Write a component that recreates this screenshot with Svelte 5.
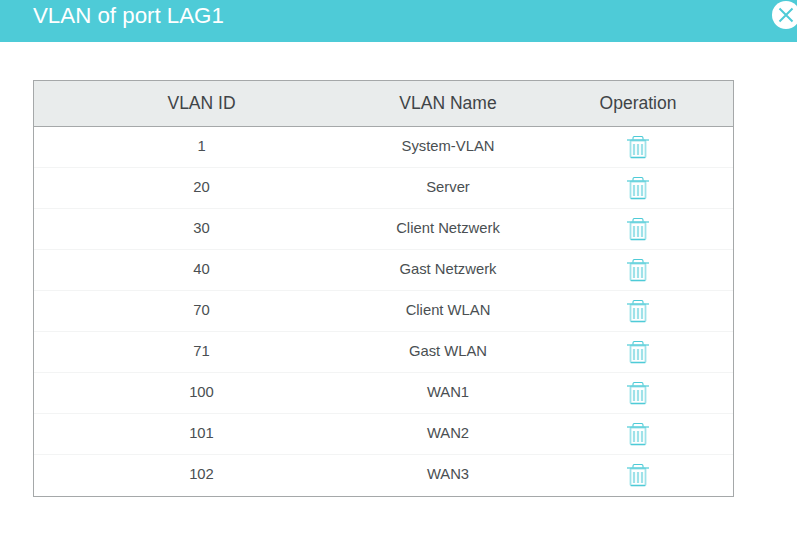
<script>
  const rows = [
    [1, 'System-VLAN'],
    [20, 'Server'],
    [30, 'Client Netzwerk'],
    [40, 'Gast Netzwerk'],
    [70, 'Client WLAN'],
    [71, 'Gast WLAN'],
    [100, 'WAN1'],
    [101, 'WAN2'],
    [102, 'WAN3'],
  ]
</script>

<div class="dialog">
  <header class="title">
    <h2>VLAN of port LAG1</h2>
    <button class="close" aria-label="Close">
      <svg width="18" height="18" viewBox="0 0 18 18">
        <path d="M2.500 2.500L15.500 15.500M15.500 2.500L2.500 15.500" stroke="#4ecbd7" stroke-width="2" fill="none" />
      </svg>
    </button>
  </header>

  <div class="table">
    <div class="row head">
      <div>VLAN ID</div>
      <div>VLAN Name</div>
      <div>Operation</div>
    </div>
    {#each rows as r}
      <div class="item">
        <div class="row">
          <div>{r[0]}</div>
          <div>{r[1]}</div>
          <div class="op">
            <svg width="22" height="23" viewBox="0 0 22 23" fill="none">
              <path d="M7 8v11M11 8v11M15 8v11" stroke="#4ecbd7" stroke-width="2.200" opacity=".55" />
              <rect x="3.500" y="4.500" width="15" height="17" rx="1" stroke="#4ecbd7" stroke-width="1.800" opacity=".55" />
              <path d="M4 21.500h14" stroke="#4ecbd7" stroke-width="1" />
              <path d="M0 4h22" stroke="#4ecbd7" stroke-width="1.200" />
              <path d="M6 3.500V2a1.500 1.500 0 0 1 1.500-1.500h7A1.500 1.500 0 0 1 16 2v1.500" stroke="#4ecbd7" stroke-width="1.100" />
            </svg>
          </div>
        </div>
      </div>
    {/each}
  </div>
</div>

<style>
  :global(body) {
    margin: 0;
    background: #fff;
    overflow: hidden;
  }

  .dialog {
    width: 797px;
    height: 533px;
    font-family: "Liberation Sans", Arial, sans-serif;
    color: #4a4f52;
  }

  .title {
    display: flex;
    justify-content: space-between;
    height: 42px;
    padding-left: 33px;
    box-sizing: border-box;
    background: #4ecbd7;
    overflow: hidden;
  }

  h2 {
    margin: 0;
    font-size: 22.300px;
    font-weight: 400;
    line-height: 31px;
    color: #fff;
  }

  .close {
    display: flex;
    align-items: center;
    justify-content: center;
    flex: none;
    width: 28px;
    height: 28px;
    margin: 1px -3px 0 0;
    padding: 0;
    border: 0;
    border-radius: 50%;
    background: #fff;
  }

  .table {
    width: 701px;
    margin: 38px 0 0 33px;
    box-sizing: border-box;
    border: 1px solid #a5a8a9;
  }

  .row {
    display: grid;
    grid-template-columns: 303px 190px 190px;
    align-items: center;
    text-align: center;
    font-size: 14.800px;
  }

  .head {
    height: 46px;
    box-sizing: border-box;
    padding-left: 16px;
    background: #e9ecec;
    border-bottom: 1px solid #a5a8a9;
    font-size: 17.500px;
    color: #3f4447;
  }

  .item {
    height: 41px;
    box-sizing: border-box;
    padding-left: 13px;
    border-bottom: 1px solid #f3f4f4;
  }

  .item:last-child {
    border-bottom: 0;
  }

  .item .row {
    height: 37px;
    padding-left: 3px;
  }

  .op {
    display: flex;
    justify-content: center;
    height: 23px;
    padding-top: 4px;
  }
</style>
